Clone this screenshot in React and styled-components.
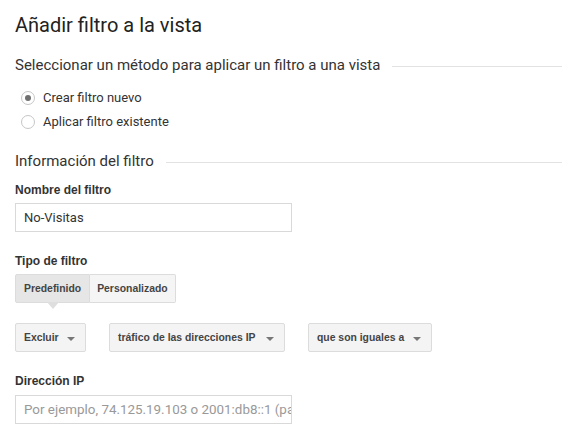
import React from 'react';
import styled, { createGlobalStyle } from 'styled-components';

const Global = createGlobalStyle`
    body {
        margin: 0;
        background: #fff;
        font-family: Roboto, "Liberation Sans", Arial, sans-serif;
        color: #222;
    }
`

const Page = styled.div`
    padding: 12px 0 0 15px;
    width: 547px;
`

const Title = styled.h1`
    margin: 0;
    font-size: 20px;
    font-weight: 400;
    line-height: 26px;
    color: #222;
`

const SectionHead = styled.div`
    display: flex;
    align-items: center;
    gap: 12px;
    margin-top: ${props => props.top}px;
    font-size: 15px;
    line-height: 20px;
    color: #333;
    white-space: nowrap;

    &::after {
        content: '';
        flex: 1;
        height: 1px;
        background: #e2e2e2;
        margin-top: 2px;
    }
`

const RadioList = styled.div`
    display: flex;
    flex-direction: column;
    gap: 8px;
    margin-top: 15px;
    padding-left: 6px;
`

const RadioRow = styled.label`
    display: flex;
    align-items: center;
    gap: 8px;
    font-size: 13px;
    line-height: 16px;
    color: #333;
`

const Circle = styled.span`
    box-sizing: border-box;
    width: 14px;
    height: 14px;
    border-radius: 50%;
    border: 1px solid #c6c6c6;
    display: flex;
    align-items: center;
    justify-content: center;

    &::after {
        content: '';
        width: 6px;
        height: 6px;
        border-radius: 50%;
        background: ${props => props.checked ? '#707070' : 'transparent'};
    }
`

const Label = styled.div`
    margin-top: ${props => props.top}px;
    font-family: "Liberation Sans", Arial, sans-serif;
    font-weight: bold;
    font-size: 12px;
    line-height: 16px;
    color: #333;
`

const TextBox = styled.div`
    box-sizing: border-box;
    margin-top: ${props => props.top}px;
    width: 277px;
    height: 29px;
    border: 1px solid #d9d9d9;
    padding: 0 8px;
    display: flex;
    align-items: center;
    font-size: ${props => props.placeholder ? 13.4 : 13}px;
    color: ${props => props.placeholder ? '#999' : '#333'};
    white-space: nowrap;
    overflow: hidden;
`

const Tabs = styled.div`
    display: flex;
    margin-top: 5px;
`

const Tab = styled.div`
    position: relative;
    box-sizing: border-box;
    height: 29px;
    padding: 0 ${props => props.pad}px;
    display: flex;
    align-items: center;
    font-family: "Liberation Sans", Arial, sans-serif;
    font-weight: bold;
    font-size: 10.4px;
    color: #444;
    background: ${props => props.active ? '#e6e6e6' : '#f5f5f5'};
    border: 1px solid #dcdcdc;
    border-left-width: ${props => props.first ? 1 : 0}px;
    border-radius: ${props => props.first ? '2px 0 0 2px' : '0 2px 2px 0'};

    ${props => props.active && `
        &::after {
            content: '';
            position: absolute;
            left: 50%;
            bottom: -7px;
            margin-left: -6px;
            border-left: 6px solid transparent;
            border-right: 6px solid transparent;
            border-top: 7px solid #dedede;
        }
    `}
`

const Selects = styled.div`
    display: flex;
    gap: 23px;
    margin-top: 20px;
`

const Select = styled.div`
    box-sizing: border-box;
    width: ${props => props.w}px;
    height: 29px;
    padding: 0 10px 0 8px;
    display: flex;
    align-items: center;
    justify-content: space-between;
    font-family: "Liberation Sans", Arial, sans-serif;
    font-weight: bold;
    font-size: 10.4px;
    color: #444;
    background: #f4f4f4;
    border: 1px solid #dcdcdc;
    border-radius: 2px;

    &::after {
        content: '';
        border-left: 4px solid transparent;
        border-right: 4px solid transparent;
        border-top: 4px solid #777;
        margin-top: 2px;
    }
`

export default function App() {
    return (
        <Page>
            <Global />
            <Title>Añadir filtro a la vista</Title>
            <SectionHead top={17}>Seleccionar un método para aplicar un filtro a una vista</SectionHead>
            <RadioList>
                <RadioRow><Circle checked />Crear filtro nuevo</RadioRow>
                <RadioRow><Circle />Aplicar filtro existente</RadioRow>
            </RadioList>
            <SectionHead top={21}>Información del filtro</SectionHead>
            <Label top={11}>Nombre del filtro</Label>
            <TextBox top={5}>No-Visitas</TextBox>
            <Label top={21}>Tipo de filtro</Label>
            <Tabs>
                <Tab first active pad={8}>Predefinido</Tab>
                <Tab pad={7}>Personalizado</Tab>
            </Tabs>
            <Selects>
                <Select w={71}>Excluir</Select>
                <Select w={176}>tráfico de las direcciones IP</Select>
                <Select w={124}>que son iguales a</Select>
            </Selects>
            <Label top={21}>Dirección IP</Label>
            <TextBox top={6} placeholder="1">Por ejemplo, 74.125.19.103 o 2001:db8::1 (para IPv6)</TextBox>
        </Page>
    );
}
